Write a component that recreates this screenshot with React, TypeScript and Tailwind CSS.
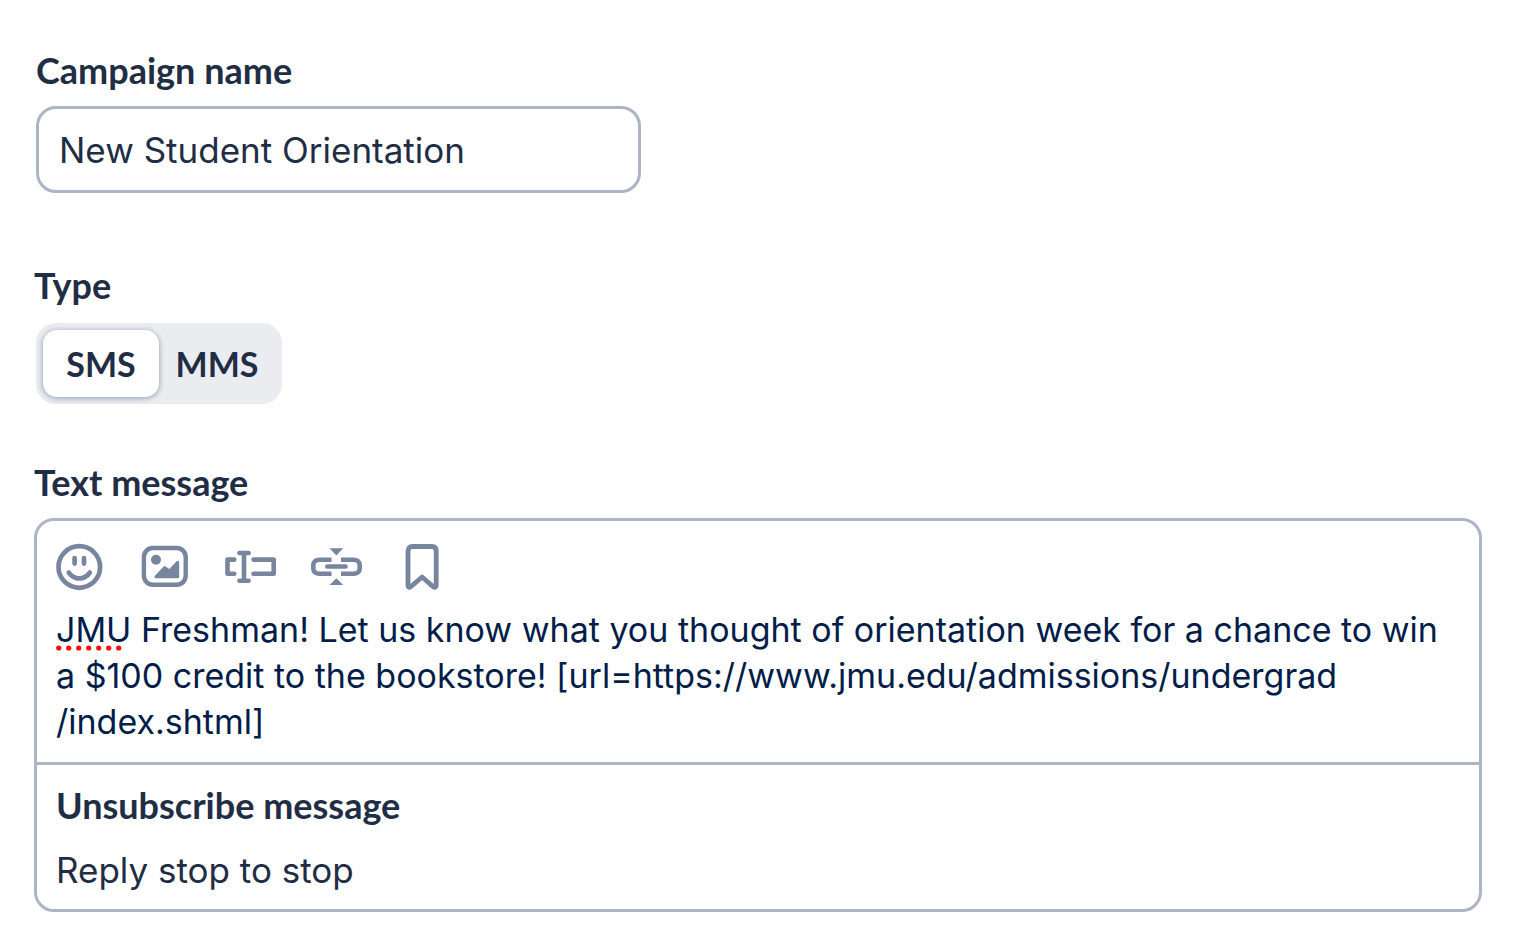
import React, { useState } from "react";
import clsx from "clsx";

type MessageType = "SMS" | "MMS";

const MESSAGE_TYPES: MessageType[] = ["SMS", "MMS"];

const DEFAULT_MESSAGE =
  "JMU Freshman! Let us know what you thought of orientation week for a chance to win a $100 credit to the bookstore! [url=https://www.jmu.edu/admissions/undergrad\n/index.shtml]";

const labelClass = "block font-[Lato,sans-serif] text-4xl leading-10 font-bold text-[#1f2d45]";

const SmileIcon = () => (
  <svg width="50" height="48" viewBox="0 0 50 48" fill="none" stroke="currentColor" strokeWidth="4.7" strokeLinecap="round" aria-hidden="true">
    <circle cx="23.3" cy="24" r="20.8" />
    <path d="M18.6 15.2v5.4M28 15.2v5.4" />
    <path d="M12.8 29.6c2.8 4 6.2 5.8 10.5 5.8s7.7-1.8 10.5-5.8" />
  </svg>
);

const ImageIcon = () => (
  <svg width="50" height="48" viewBox="-1 0 50 48" fill="none" stroke="currentColor" strokeWidth="4.4" strokeLinejoin="round" aria-hidden="true">
    <rect x="2.9" y="5" width="41.8" height="36.8" rx="9" />
    <circle cx="15" cy="16.8" r="5" fill="currentColor" stroke="none" />
    <path d="M15 33.8L23.8 24.6L28.5 28L36.7 19.4V33.8Z" fill="currentColor" strokeWidth="3" />
  </svg>
);

const FieldIcon = () => (
  <svg width="52" height="48" viewBox="0 0 52 48" fill="none" stroke="currentColor" strokeWidth="4.6" strokeLinecap="round" strokeLinejoin="round" aria-hidden="true">
    <path d="M10.3 16.6H3.5V30.8H10.3" />
    <path d="M15.4 10H24.6M20 10V37.8M15.4 37.8H24.6" />
    <path d="M29.5 16.6H49.7V30.8H29.5" />
  </svg>
);

const LinkIcon = () => (
  <svg width="58" height="48" viewBox="0 0 58 48" fill="none" stroke="currentColor" strokeWidth="4.6" aria-hidden="true">
    <path d="M21.5 16.7H9.5C5.5 16.7 3.3 18.8 3.3 22V25.4C3.3 28.6 5.5 30.7 9.5 30.7H21.5" />
    <path d="M31 16.7H43.5C47.5 16.7 49.7 18.8 49.7 22V25.4C49.7 28.6 47.5 30.7 43.5 30.7H31" />
    <path d="M17.3 23.5H35.5" strokeLinecap="round" />
    <path d="M19.5 5.2H33.2L26.4 12.4ZM19.5 42H33.2L26.4 35.2Z" fill="currentColor" stroke="none" />
  </svg>
);

const BookmarkIcon = () => (
  <svg width="38" height="48" viewBox="-2 0 38 48" fill="none" stroke="currentColor" strokeWidth="4.8" strokeLinejoin="round" aria-hidden="true">
    <path d="M4 8C4 5 5.6 3.5 8.4 3.5H27.8C30.6 3.5 32.2 5 32.2 8V42.8C32.2 44.2 30.6 44.8 29.4 43.8L18.1 34L6.8 43.8C5.6 44.8 4 44.2 4 42.8Z" />
  </svg>
);

const TOOLS = [
  { name: "Insert emoji", Icon: SmileIcon },
  { name: "Insert image", Icon: ImageIcon },
  { name: "Insert field", Icon: FieldIcon },
  { name: "Shorten link", Icon: LinkIcon },
  { name: "Saved messages", Icon: BookmarkIcon },
];

export default function App() {
  const [name, setName] = useState("New Student Orientation");
  const [type, setType] = useState<MessageType>("SMS");
  const [message, setMessage] = useState(DEFAULT_MESSAGE);
  const [unsubscribe, setUnsubscribe] = useState("Reply stop to stop");

  return (
    <form className="min-h-screen bg-white pt-[50px] pr-[37px] pb-5 pl-[34px] font-[Inter,sans-serif]">
      <div className="pl-0.5">
        <label htmlFor="campaign-name" className={labelClass}>
          Campaign name
        </label>
        <input
          id="campaign-name"
          type="text"
          value={name}
          onChange={(e) => setName(e.target.value)}
          className="mt-4 block h-[87px] w-full max-w-[605px] rounded-[20px] border-3 border-[#adb5c4] px-5 text-[35px] text-[#1f2d45] outline-none"
        />
      </div>

      {/* Message type */}
      <div id="type-label" className={clsx(labelClass, "mt-18")}>
        Type
      </div>
      <div className="mt-[18px] pl-0.5">
        <div role="group" aria-labelledby="type-label" className="flex w-fit rounded-[20px] bg-[#ebecf0] p-[7px]">
          {MESSAGE_TYPES.map((t) => (
            <button
              key={t}
              type="button"
              aria-pressed={type === t}
              onClick={() => setType(t)}
              className={clsx(
                "h-[67px] w-[116px] rounded-[14px] font-[Lato,sans-serif] text-[34px] font-bold text-[#1f2d45]",
                type === t && "bg-white shadow-[0_1px_5px_1px_#a3afbf]"
              )}
            >
              {t}
            </button>
          ))}
        </div>
      </div>

      {/* Message editor */}
      <label htmlFor="message" className={clsx(labelClass, "mt-[58px]")}>
        Text message
      </label>
      <div className="mt-4 rounded-[20px] border-3 border-[#adb5c4]">
        <div className="px-[19px] pt-[22px] pb-[17px]">
          <div className="flex gap-[34px] text-[#77869e]">
            {TOOLS.map(({ name: toolName, Icon }) => (
              <button key={toolName} type="button" aria-label={toolName}>
                <Icon />
              </button>
            ))}
          </div>
          <div className="relative mt-4">
            <textarea
              id="message"
              rows={3}
              spellCheck={false}
              value={message}
              onChange={(e) => setMessage(e.target.value)}
              className="block w-full resize-none overflow-hidden text-[34px] leading-[46px] text-[#021d49] outline-none"
            />
            {/* Spelling mark under the first word */}
            <svg className="pointer-events-none absolute top-[38px] left-0" width="68" height="6" fill="#ff0d0d" aria-hidden="true">
              {[0, 1, 2, 3, 4, 5, 6].map((i) => (
                <circle key={i} cx={2.7 + i * 10} cy="3" r="2.6" />
              ))}
            </svg>
          </div>
        </div>
        <div className="border-t-3 border-[#adb5c4] px-[19px] pt-5 pb-4">
          <label htmlFor="unsubscribe" className={labelClass}>
            Unsubscribe message
          </label>
          <input
            id="unsubscribe"
            type="text"
            value={unsubscribe}
            onChange={(e) => setUnsubscribe(e.target.value)}
            className="mt-[22px] block h-[46px] w-full text-[35px] text-[#1f2d45] outline-none"
          />
        </div>
      </div>
    </form>
  );
}
